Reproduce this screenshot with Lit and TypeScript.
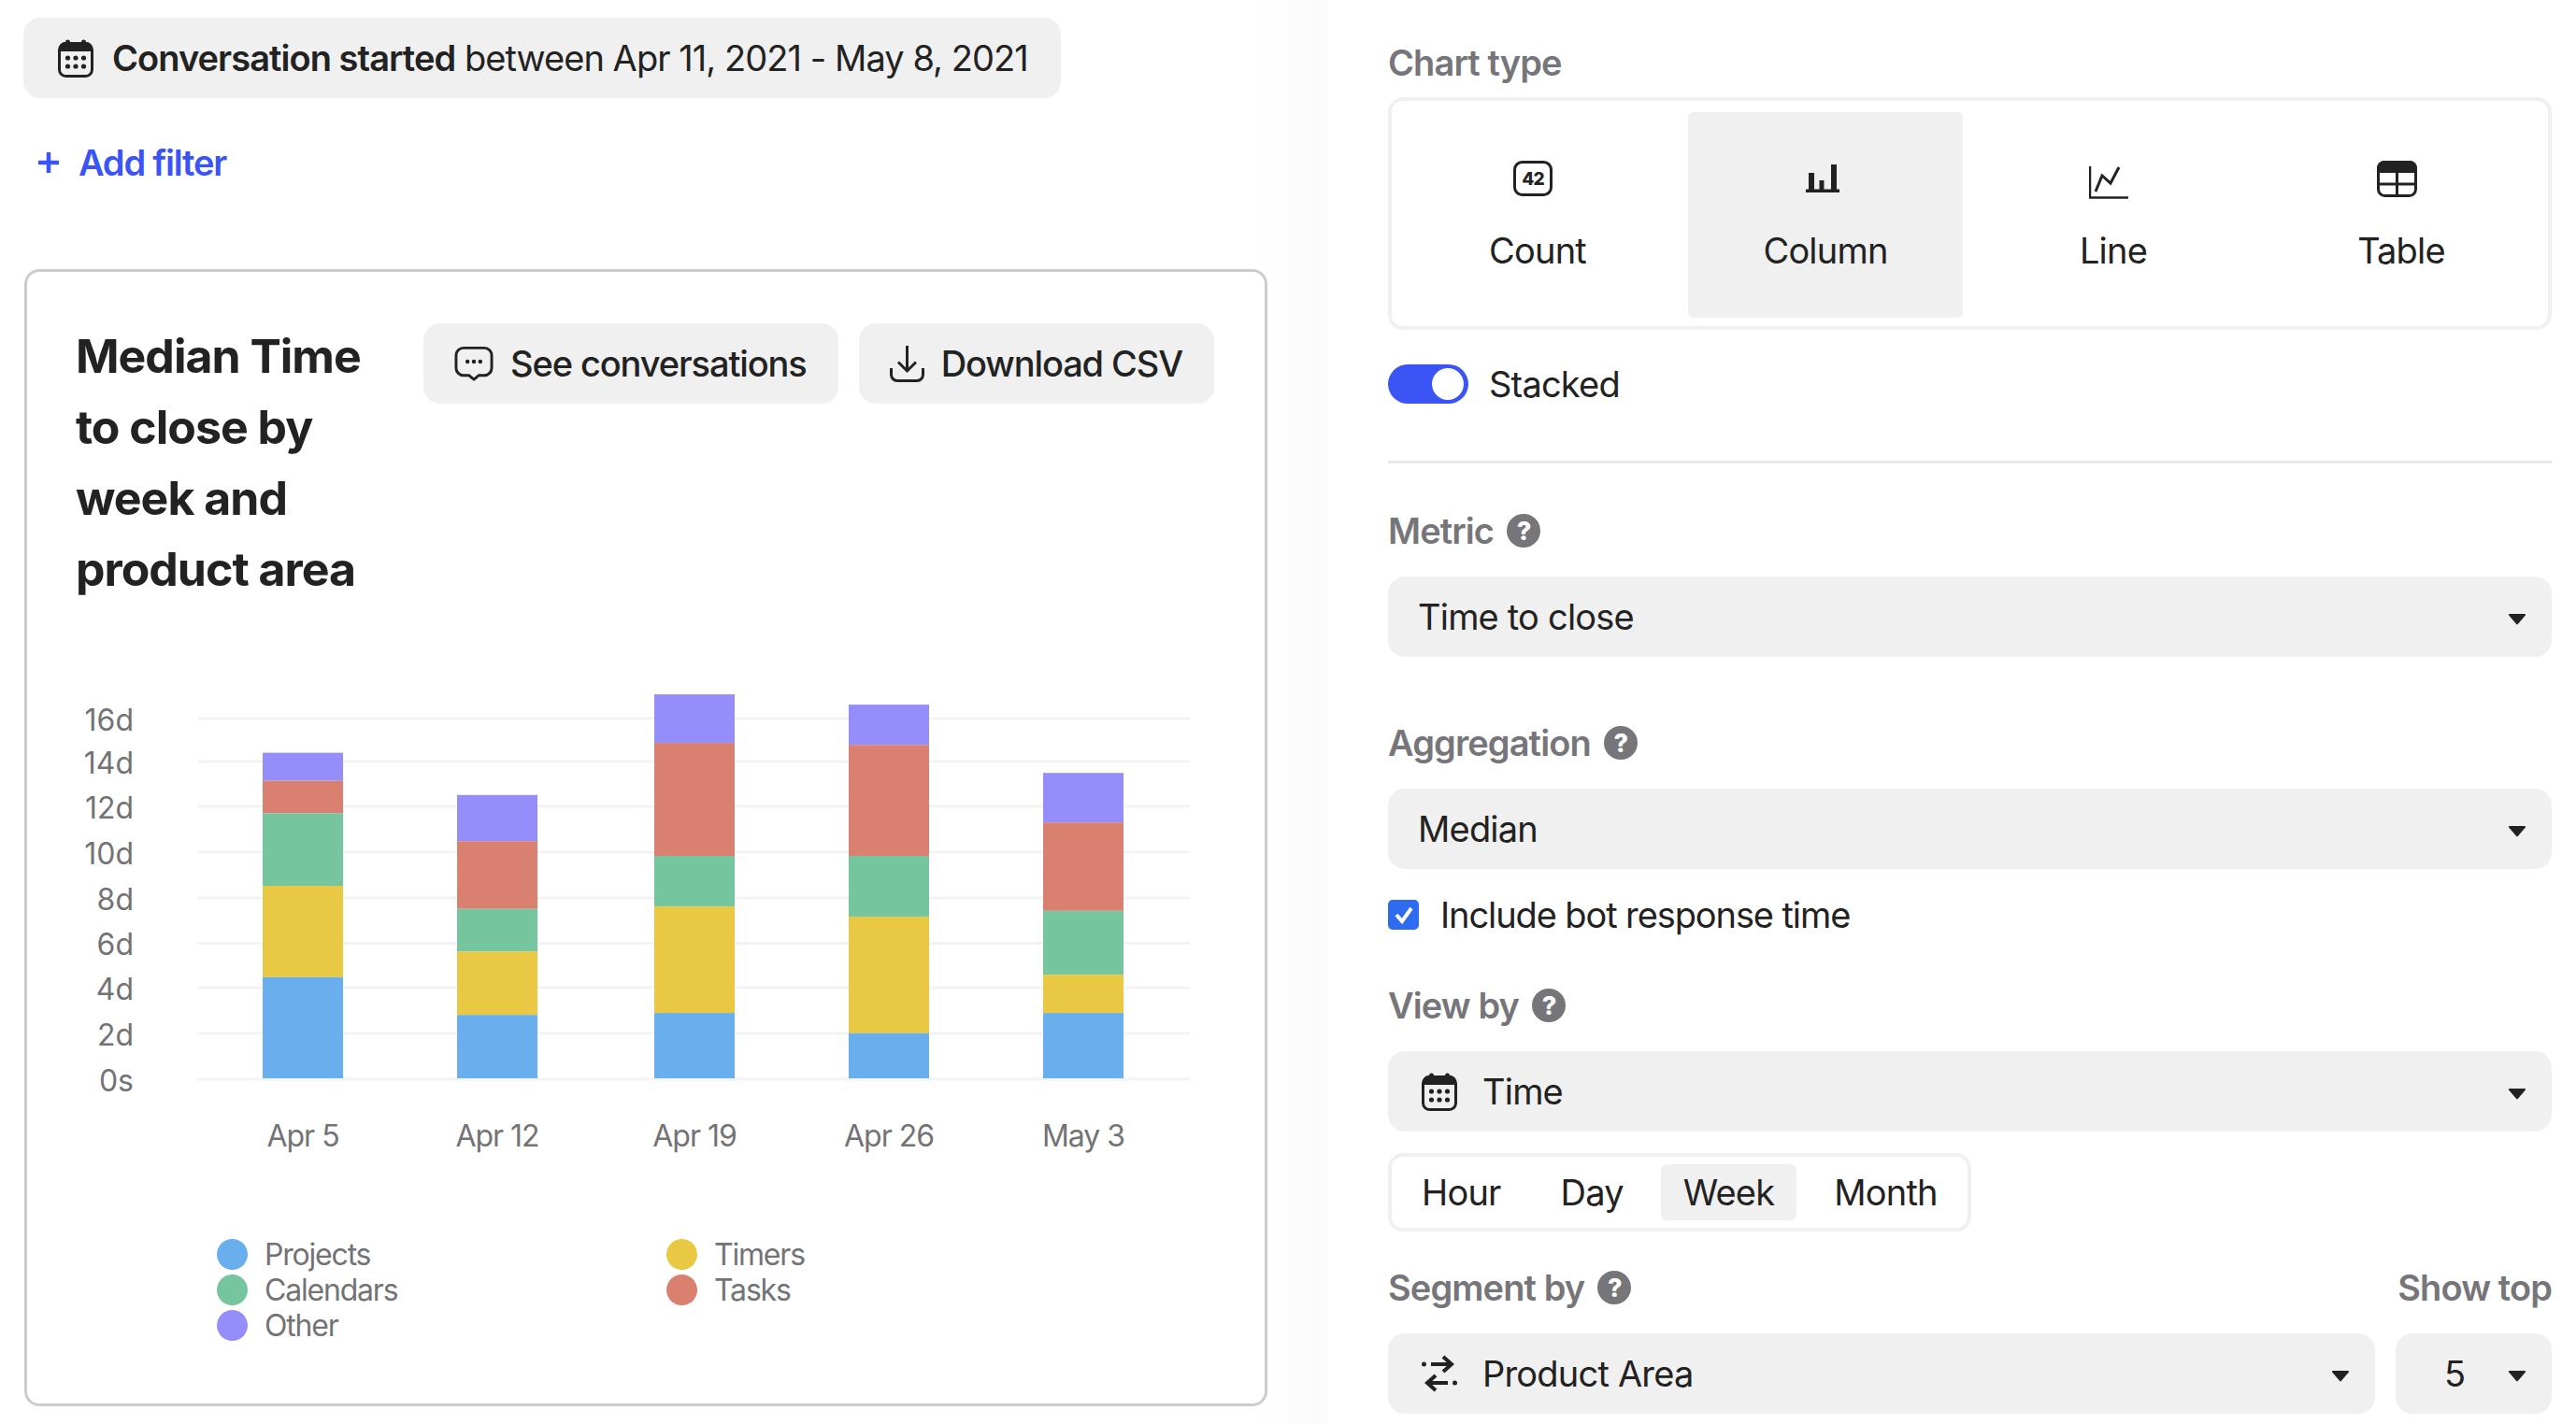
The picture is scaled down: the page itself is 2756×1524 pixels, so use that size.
import { LitElement, html, css, svg } from 'lit'
import { customElement } from 'lit/decorators.js'

const COLORS = {
  projects: '#69aeed',
  timers: '#e9c843',
  calendars: '#75c69e',
  tasks: '#da8070',
  other: '#958dfa',
}

// stack boundaries, page y coordinates, top to bottom
const BARS = [
  { label: 'Apr 5', x: 281, stops: [805.6, 835.6, 870.3, 948, 1045.8, 1154] },
  { label: 'Apr 12', x: 489, stops: [850.8, 900.2, 972.7, 1018.4, 1086.2, 1154] },
  { label: 'Apr 19', x: 700, stops: [743.1, 795.1, 916, 970.1, 1084.1, 1154] },
  { label: 'Apr 26', x: 908, stops: [754.1, 797.2, 916, 981.1, 1105.7, 1154] },
  { label: 'May 3', x: 1116, stops: [827.2, 880.2, 974.8, 1043.1, 1084.1, 1154] },
]
const STACK = [COLORS.other, COLORS.tasks, COLORS.calendars, COLORS.timers, COLORS.projects]
const TICKS: [string, number][] = [
  ['16d', 769], ['14d', 815], ['12d', 863], ['10d', 912], ['8d', 961],
  ['6d', 1009.5], ['4d', 1057], ['2d', 1106], ['0s', 1155],
]

const calendarIcon = html`<svg class="cal" viewBox="0 0 38 41" width="38" height="41">
  <rect x="1.5" y="4.5" width="35" height="35" rx="7" fill="none" stroke="#222" stroke-width="3"/>
  <path d="M8 3h22a7 7 0 0 1 7 7v3H1v-3a7 7 0 0 1 7-7z" fill="#222"/>
  <rect x="8" y="0.5" width="5" height="6" rx="2.5" fill="#222"/>
  <rect x="25" y="0.5" width="5" height="6" rx="2.5" fill="#222"/>
  <g fill="#222">
    <circle cx="10.5" cy="20" r="2.6"/><circle cx="19" cy="20" r="2.6"/><circle cx="27.5" cy="20" r="2.6"/>
    <circle cx="10.5" cy="29" r="2.6"/><circle cx="19" cy="29" r="2.6"/><circle cx="27.5" cy="29" r="2.6"/>
  </g>
</svg>`

const helpIcon = html`<span class="help">?</span>`

const caret = html`<svg class="caret" viewBox="0 0 22 14" width="20" height="13">
  <path d="M2 1h18a1 1 0 0 1 .8 1.6l-9 10.4a1 1 0 0 1-1.6 0l-9-10.4A1 1 0 0 1 2 1z" fill="#222"/>
</svg>`

@customElement('app-root')
export class AppRoot extends LitElement {
  static styles = css`
    :host {
      display: block;
      width: 2756px;
      height: 1524px;
      overflow: hidden;
      background: #fff;
      font-family: Inter, "Noto Sans", sans-serif;
      color: #222;
      font-size: 38px;
      letter-spacing: -0.8px;
    }
    .page {
      display: grid;
      grid-template-columns: 1420px 1fr;
      height: 1524px;
    }
    .left {
      padding: 19px 0 0 25px;
      background: linear-gradient(90deg, #fff 94%, #fbfbfb 100%);
    }
    .right {
      padding: 45px 26px 0 65px;
    }
    .pill {
      display: inline-flex;
      align-items: center;
      gap: 20px;
      height: 86px;
      padding: 0 35px 0 37px;
      background: #f0f0f0;
      border-radius: 18px;
      white-space: nowrap;
      letter-spacing: -0.95px;
    }
    .pill b { font-weight: 600; }
    .add {
      display: flex;
      align-items: center;
      gap: 21px;
      margin: 46px 0 0 16px;
      height: 46px;
      color: #3b54f5;
      font-weight: 600;
      letter-spacing: -1.2px;
    }
    .card {
      box-sizing: border-box;
      width: 1330px;
      height: 1217px;
      margin: 91px 0 0 1px;
      border: 3px solid #ccc;
      border-radius: 16px;
      background: #fff;
      padding: 55px 53px 0 52px;
    }
    .card-head {
      display: flex;
      align-items: flex-start;
    }
    h1 {
      flex: 0 0 340px;
      margin: -3px 32px 0 0;
      font-size: 50px;
      line-height: 76px;
      font-weight: 700;
      letter-spacing: -1px;
    }
    .actions {
      display: flex;
      gap: 22px;
    }
    .btn {
      display: flex;
      align-items: center;
      gap: 18px;
      height: 86px;
      padding: 0 34px 0 33px;
      background: #f0f0f0;
      border-radius: 18px;
      font-weight: 500;
      white-space: nowrap;
      letter-spacing: -1.1px;
    }
    .chart {
      display: block;
      width: 1324px;
      height: 530px;
      margin: 73px 0 0 -52px;
    }
    .chart text {
      font-size: 32px;
      letter-spacing: -1px;
      fill: #737376;
      font-family: Inter, "Noto Sans", sans-serif;
    }
    .chart text.tick { letter-spacing: 0; }
    .legend {
      display: grid;
      grid-template-columns: 481px 1fr;
      grid-auto-rows: 38px;
      margin: 73px 0 0 151px;
      font-size: 32px;
      letter-spacing: -1.2px;
      color: #737376;
    }
    .legend div {
      display: flex;
      align-items: center;
      gap: 18px;
    }
    .legend i {
      width: 33px;
      height: 33px;
      border-radius: 50%;
    }
    .label {
      display: flex;
      align-items: center;
      gap: 14px;
      height: 44px;
      color: #76767a;
      font-weight: 600;
      letter-spacing: -0.9px;
    }
    .label.row {
      justify-content: space-between;
    }
    .label span.grp {
      display: flex;
      align-items: center;
      gap: 14px;
    }
    .help {
      display: inline-flex;
      align-items: center;
      justify-content: center;
      width: 36px;
      height: 36px;
      border-radius: 50%;
      background: #76767a;
      color: #fff;
      font-size: 27px;
      font-weight: 800;
    }
    .types {
      display: grid;
      grid-template-columns: repeat(4, 294px);
      gap: 14px;
      margin-top: 15px;
      padding: 12px 9px 9px;
      border: 4px solid #f0f0f0;
      border-radius: 16px;
    }
    .type {
      display: flex;
      flex-direction: column;
      align-items: center;
      height: 220px;
      border-radius: 6px;
    }
    .type.on { background: #f0f0f0; }
    .type .ico {
      display: flex;
      align-items: center;
      justify-content: center;
      height: 60px;
      margin: 41px 10px 0 0;
    }
    .type .name {
      margin-top: 24px;
      line-height: 46px;
    }
    .line-ico { margin-top: 8px; }
    .column-ico { margin-left: 3px; }
    .toggle-row {
      display: flex;
      align-items: center;
      gap: 22px;
      margin-top: 35px;
    }
    .toggle {
      position: relative;
      width: 86px;
      height: 42px;
      border-radius: 21px;
      background: #3b54f5;
    }
    .toggle::after {
      content: "";
      position: absolute;
      right: 5px;
      top: 4px;
      width: 34px;
      height: 34px;
      border-radius: 50%;
      background: #fff;
    }
    hr {
      height: 3px;
      margin: 59px 0 50px;
      border: 0;
      background: #e9e9e9;
    }
    .select {
      display: flex;
      align-items: center;
      gap: 26px;
      box-sizing: border-box;
      height: 86px;
      margin-top: 27px;
      padding: 0 27px 0 32px;
      background: #f0f0f0;
      border-radius: 18px;
    }
    .select .val { flex: 1; }
    .select .caret { margin-top: 4px; }
    .select.icon { padding-left: 36px; }
    .select.icon .val { margin-left: 1px; }
    .section { margin-top: 70px; }
    .check-row {
      display: flex;
      align-items: center;
      gap: 23px;
      height: 46px;
      margin-top: 26px;
      letter-spacing: -1.1px;
    }
    .check {
      display: flex;
      align-items: center;
      justify-content: center;
      width: 33px;
      height: 32px;
      border-radius: 5px;
      background: #2f6bf0;
    }
    .view-by { margin-top: 52px; }
    .units {
      display: flex;
      width: fit-content;
      gap: 16px;
      margin-top: 23px;
      padding: 8px;
      border: 4px solid #f0f0f0;
      border-radius: 16px;
    }
    .unit {
      padding: 0 24px;
      height: 60px;
      line-height: 60px;
      border-radius: 6px;
    }
    .unit.on { background: #f0f0f0; }
    .segment-by { margin-top: 38px; }
    .seg-row {
      display: grid;
      grid-template-columns: 1fr 167px;
      gap: 22px;
    }
    .seg-row .select.small { padding: 0 27px 0 52px; }
  `

  private renderChart() {
    return html`<svg class="chart" viewBox="29 720 1324 530">
      ${TICKS.map(([label, y]) => svg`
        <rect x="211" y=${y - 1.5} width="1062" height="3" fill="#f3f3f3"/>
        <text class="tick" x="143" y=${y + 1} text-anchor="end" dominant-baseline="central">${label}</text>
      `)}
      ${BARS.map(bar => svg`
        ${STACK.map((fill, i) => svg`
          <rect x=${bar.x} y=${bar.stops[i]} width="86" height=${bar.stops[i + 1] - bar.stops[i]} fill=${fill}/>
        `)}
        <text x=${bar.x + 43} y="1215" text-anchor="middle" dominant-baseline="central">${bar.label}</text>
      `)}
    </svg>`
  }

  private renderType(name: string, icon: unknown, on = false) {
    return html`<div class="type ${on ? 'on' : ''}">
      <div class="ico">${icon}</div>
      <div class="name">${name}</div>
    </div>`
  }

  render() {
    const countIcon = html`<svg viewBox="0 0 42 38" width="42" height="38">
      <rect x="1.5" y="1.5" width="39" height="35" rx="8" fill="none" stroke="#222" stroke-width="3"/>
      <text x="21" y="25.5" text-anchor="middle" font-size="19" font-weight="800" fill="#222" font-family="Inter, sans-serif">42</text>
    </svg>`
    const columnIcon = html`<svg class="column-ico" viewBox="0 0 36 30" width="36" height="30">
      <path d="M0 26.500h36V30H0zM3 9h6v18H3zM14.500 17h5v10h-5zM27 0h6v27h-6z" fill="#222"/>
    </svg>`
    const lineIcon = html`<svg class="line-ico" viewBox="0 0 42 35" width="42" height="35">
      <path d="M1 0v33.500h41" fill="none" stroke="#222" stroke-width="2.500"/>
      <path d="M7 27l7-17 9 8 9-17" fill="none" stroke="#222" stroke-width="3"/>
    </svg>`
    const tableIcon = html`<svg viewBox="0 0 43 39" width="43" height="39">
      <path d="M8 0h27a8 8 0 0 1 8 8v5H0V8a8 8 0 0 1 8-8z" fill="#222"/>
      <rect x="1.500" y="1.500" width="40" height="36" rx="7" fill="none" stroke="#222" stroke-width="3"/>
      <path d="M21.500 10v28M1 25h41" stroke="#222" stroke-width="3"/>
    </svg>`
    const chatIcon = html`<svg viewBox="0 0 43 38" width="42" height="38">
      <path d="M10 2h23a8 8 0 0 1 8 8v14a8 8 0 0 1-8 8h-6l-5.500 4.500L16 32h-6a8 8 0 0 1-8-8V10a8 8 0 0 1 8-8z" fill="none" stroke="#222" stroke-width="3" stroke-linejoin="round"/>
      <circle cx="14.500" cy="17" r="2.300" fill="#222"/><circle cx="21.500" cy="17" r="2.300" fill="#222"/><circle cx="28.500" cy="17" r="2.300" fill="#222"/>
    </svg>`
    const downloadIcon = html`<svg viewBox="0 0 37 39" width="37" height="39">
      <path d="M18.500 0v26M9 17.500l9.500 9.500 9.500-9.500" fill="none" stroke="#222" stroke-width="3"/>
      <path d="M1.500 24v7a6.500 6.500 0 0 0 6.500 6.500h21a6.500 6.500 0 0 0 6.500-6.500v-7" fill="none" stroke="#222" stroke-width="3"/>
    </svg>`
    const swapIcon = html`<svg viewBox="0 0 38 40" width="38" height="40">
      <path d="M10 10h22M23 2l9 8-9 8M28 30H6M15 22l-9 8 9 8" fill="none" stroke="#222" stroke-width="4"/>
      <circle cx="2.500" cy="10" r="2.500" fill="#222"/><circle cx="35.500" cy="30" r="2.500" fill="#222"/>
    </svg>`

    return html`<div class="page">
      <div class="left">
        <div class="pill">
          ${calendarIcon}
          <span><b>Conversation started</b> between Apr 11, 2021 - May 8, 2021</span>
        </div>
        <div class="add">
          <svg viewBox="0 0 22 22" width="22" height="22"><path d="M11 1v20M1 11h20" stroke="#3b54f5" stroke-width="4.500" stroke-linecap="round"/></svg>
          Add filter
        </div>
        <div class="card">
          <div class="card-head">
            <h1>Median Time to close by week and product area</h1>
            <div class="actions">
              <div class="btn">${chatIcon}See conversations</div>
              <div class="btn">${downloadIcon}Download CSV</div>
            </div>
          </div>
          ${this.renderChart()}
          <div class="legend">
            <div><i style="background:${COLORS.projects}"></i>Projects</div>
            <div><i style="background:${COLORS.timers}"></i>Timers</div>
            <div><i style="background:${COLORS.calendars}"></i>Calendars</div>
            <div><i style="background:${COLORS.tasks}"></i>Tasks</div>
            <div><i style="background:${COLORS.other}"></i>Other</div>
          </div>
        </div>
      </div>

      <div class="right">
        <div class="label">Chart type</div>
        <div class="types">
          ${this.renderType('Count', countIcon)}
          ${this.renderType('Column', columnIcon, true)}
          ${this.renderType('Line', lineIcon)}
          ${this.renderType('Table', tableIcon)}
        </div>
        <div class="toggle-row"><div class="toggle"></div>Stacked</div>
        <hr />

        <div class="label">Metric ${helpIcon}</div>
        <div class="select"><span class="val">Time to close</span>${caret}</div>

        <div class="section">
          <div class="label">Aggregation ${helpIcon}</div>
          <div class="select"><span class="val">Median</span>${caret}</div>
        </div>
        <div class="check-row">
          <div class="check">
            <svg viewBox="0 0 22 20" width="22" height="20"><path d="M3 10l6 7L19 3" fill="none" stroke="#fff" stroke-width="4"/></svg>
          </div>
          Include bot response time
        </div>

        <div class="view-by">
          <div class="label">View by ${helpIcon}</div>
          <div class="select icon">${calendarIcon}<span class="val">Time</span>${caret}</div>
        </div>
        <div class="units">
          <div class="unit">Hour</div>
          <div class="unit">Day</div>
          <div class="unit on">Week</div>
          <div class="unit">Month</div>
        </div>

        <div class="segment-by">
          <div class="label row">
            <span class="grp">Segment by ${helpIcon}</span>
            <span>Show top</span>
          </div>
          <div class="seg-row">
            <div class="select icon">${swapIcon}<span class="val">Product Area</span>${caret}</div>
            <div class="select small"><span class="val">5</span>${caret}</div>
          </div>
        </div>
      </div>
    </div>`
  }
}
